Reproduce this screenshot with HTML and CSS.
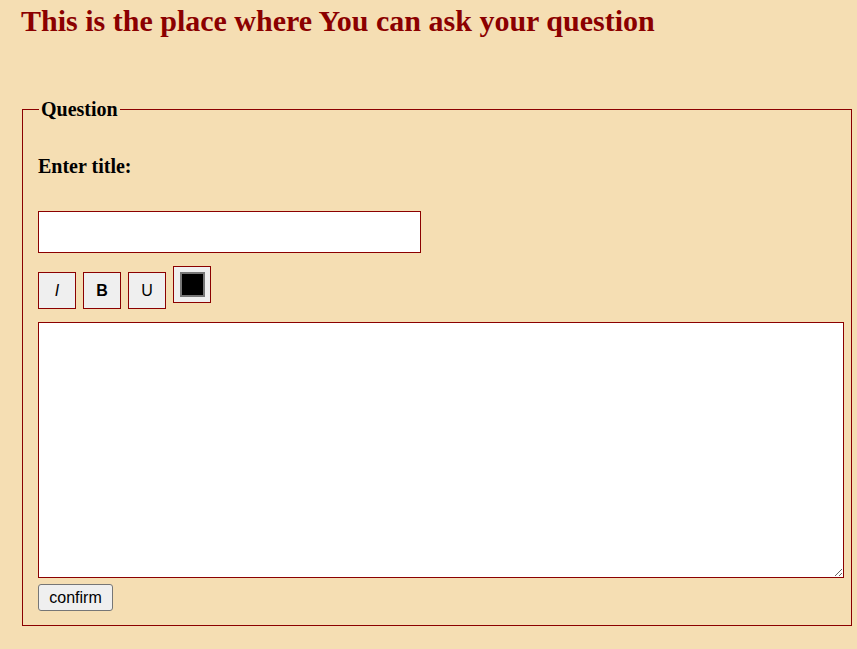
FILE: index.html
```html
<!DOCTYPE html>
<html>
<head>
<meta charset="utf-8">
<link rel="stylesheet" href="styles.css">
</head>
<body>
<h1 class="title">This is the place where You can ask your question</h1>
<form class="form">
  <fieldset class="box">
    <legend class="legend">Question</legend>
    <label class="label" for="t">Enter title:</label>
    <input class="field" id="t" type="text">
    <div class="tools">
      <button type="button" class="tool italic">I</button>
      <button type="button" class="tool bold">B</button>
      <button type="button" class="tool">U</button>
      <button type="button" class="tool color"><span class="swatch"></span></button>
    </div>
    <textarea class="area"></textarea>
    <button type="button" class="confirm">confirm</button>
  </fieldset>
</form>
</body>
</html>
```
FILE: styles.css
```css
html, body {
  margin: 0;
  padding: 0;
  background: #f5deb3;
}
body {
  font-family: "Liberation Serif", serif;
  color: #000;
}
.title {
  margin: 0;
  padding: 3px 0 0 21px;
  font-size: 30px;
  font-weight: bold;
  color: #8b0000;
  line-height: 36px;
}
.form {
  margin: 0;
  padding: 59px 0 0 22px;
}
.box {
  width: 798px;
  margin: 0;
  padding: 0 7px 14px 15px;
  border: 1px solid #8b0000;
  display: flex;
  flex-direction: column;
  align-items: flex-start;
}
.legend {
  font-size: 20px;
  font-weight: bold;
  padding: 0 2px;
  margin-left: 1px;
  line-height: 23px;
}
.label {
  display: block;
  font-size: 20px;
  font-weight: bold;
  line-height: 23px;
  margin-top: 34px;
}
.field {
  box-sizing: border-box;
  width: 383px;
  height: 42px;
  margin: 33px 0 0 0;
  border: 1px solid #8b0000;
  background: #fff;
  padding: 0;
}
.tools {
  display: flex;
  gap: 7px;
  margin-top: 13px;
  align-items: flex-start;
}
.tool {
  box-sizing: border-box;
  width: 38px;
  height: 37px;
  margin: 6px 0 0 0;
  padding: 0;
  border: 1px solid #8b0000;
  background: #efefef;
  font-family: "Liberation Sans", Arial, sans-serif;
  font-size: 16px;
  color: #000;
}
.italic { font-style: italic; }
.bold { font-weight: bold; }
.color {
  margin-top: 0;
  display: flex;
  align-items: center;
  justify-content: center;
}
.swatch {
  display: block;
  box-sizing: border-box;
  width: 25px;
  height: 25px;
  background: #000;
  border: 2px solid #777;
}
.area {
  box-sizing: border-box;
  width: 806px;
  height: 256px;
  margin: 13px 0 0 0;
  border: 1px solid #8b0000;
  background: #fff;
  padding: 2px;
  display: block;
}
.confirm {
  box-sizing: border-box;
  width: 75px;
  height: 27px;
  margin-top: 6px;
  padding: 0;
  font-family: "Liberation Sans", Arial, sans-serif;
  font-size: 16px;
  color: #000;
  background: #efefef;
  border: 1px solid #767676;
  border-radius: 3px;
}
```
